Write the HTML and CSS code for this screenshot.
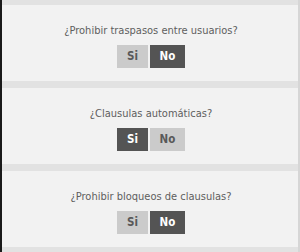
FILE: index.html
```html
<!DOCTYPE html>
<html>
<head>
<meta charset="utf-8">
<link rel="stylesheet" href="styles.css">
</head>
<body>
<div class="page">
  <div class="card">
    <div class="question">¿Prohibir traspasos entre usuarios?</div>
    <div class="toggle">
      <span class="opt">Si</span><span class="opt active">No</span>
    </div>
  </div>
  <div class="card">
    <div class="question">¿Clausulas automáticas?</div>
    <div class="toggle">
      <span class="opt active">Si</span><span class="opt">No</span>
    </div>
  </div>
  <div class="card">
    <div class="question">¿Prohibir bloqueos de clausulas?</div>
    <div class="toggle">
      <span class="opt">Si</span><span class="opt active">No</span>
    </div>
  </div>
</div>
</body>
</html>
```
FILE: styles.css
```css
html, body {
  margin: 0;
  padding: 0;
}
body {
  width: 300px;
  height: 252px;
  overflow: hidden;
  background: #e2e2e2;
  font-family: "DejaVu Sans Condensed", "DejaVu Sans", sans-serif;
}
.page {
  display: flex;
  flex-direction: column;
  gap: 7px;
  padding-top: 5px;
  border-left: 2px solid #1a1a1a;
  border-right: 2px solid #d6d6d6;
  height: 252px;
  box-sizing: border-box;
}
.card {
  background: #f2f2f2;
  height: 76px;
  box-sizing: border-box;
  padding-top: 18px;
  display: flex;
  flex-direction: column;
  align-items: center;
}
.question {
  font-size: 11px;
  line-height: 16px;
  color: #5e5e5e;
  margin-left: 2px;
}
.toggle {
  margin-top: 6px;
  display: flex;
  gap: 2px;
  margin-left: 2px;
}
.opt {
  height: 23px;
  line-height: 23px;
  text-align: center;
  font-size: 11.5px;
  font-weight: bold;
  background: #cbcbcb;
  color: #595959;
}
.opt:first-child {
  width: 31px;
}
.opt:last-child {
  width: 35px;
}
.opt.active {
  background: #545454;
  color: #ffffff;
}
```
